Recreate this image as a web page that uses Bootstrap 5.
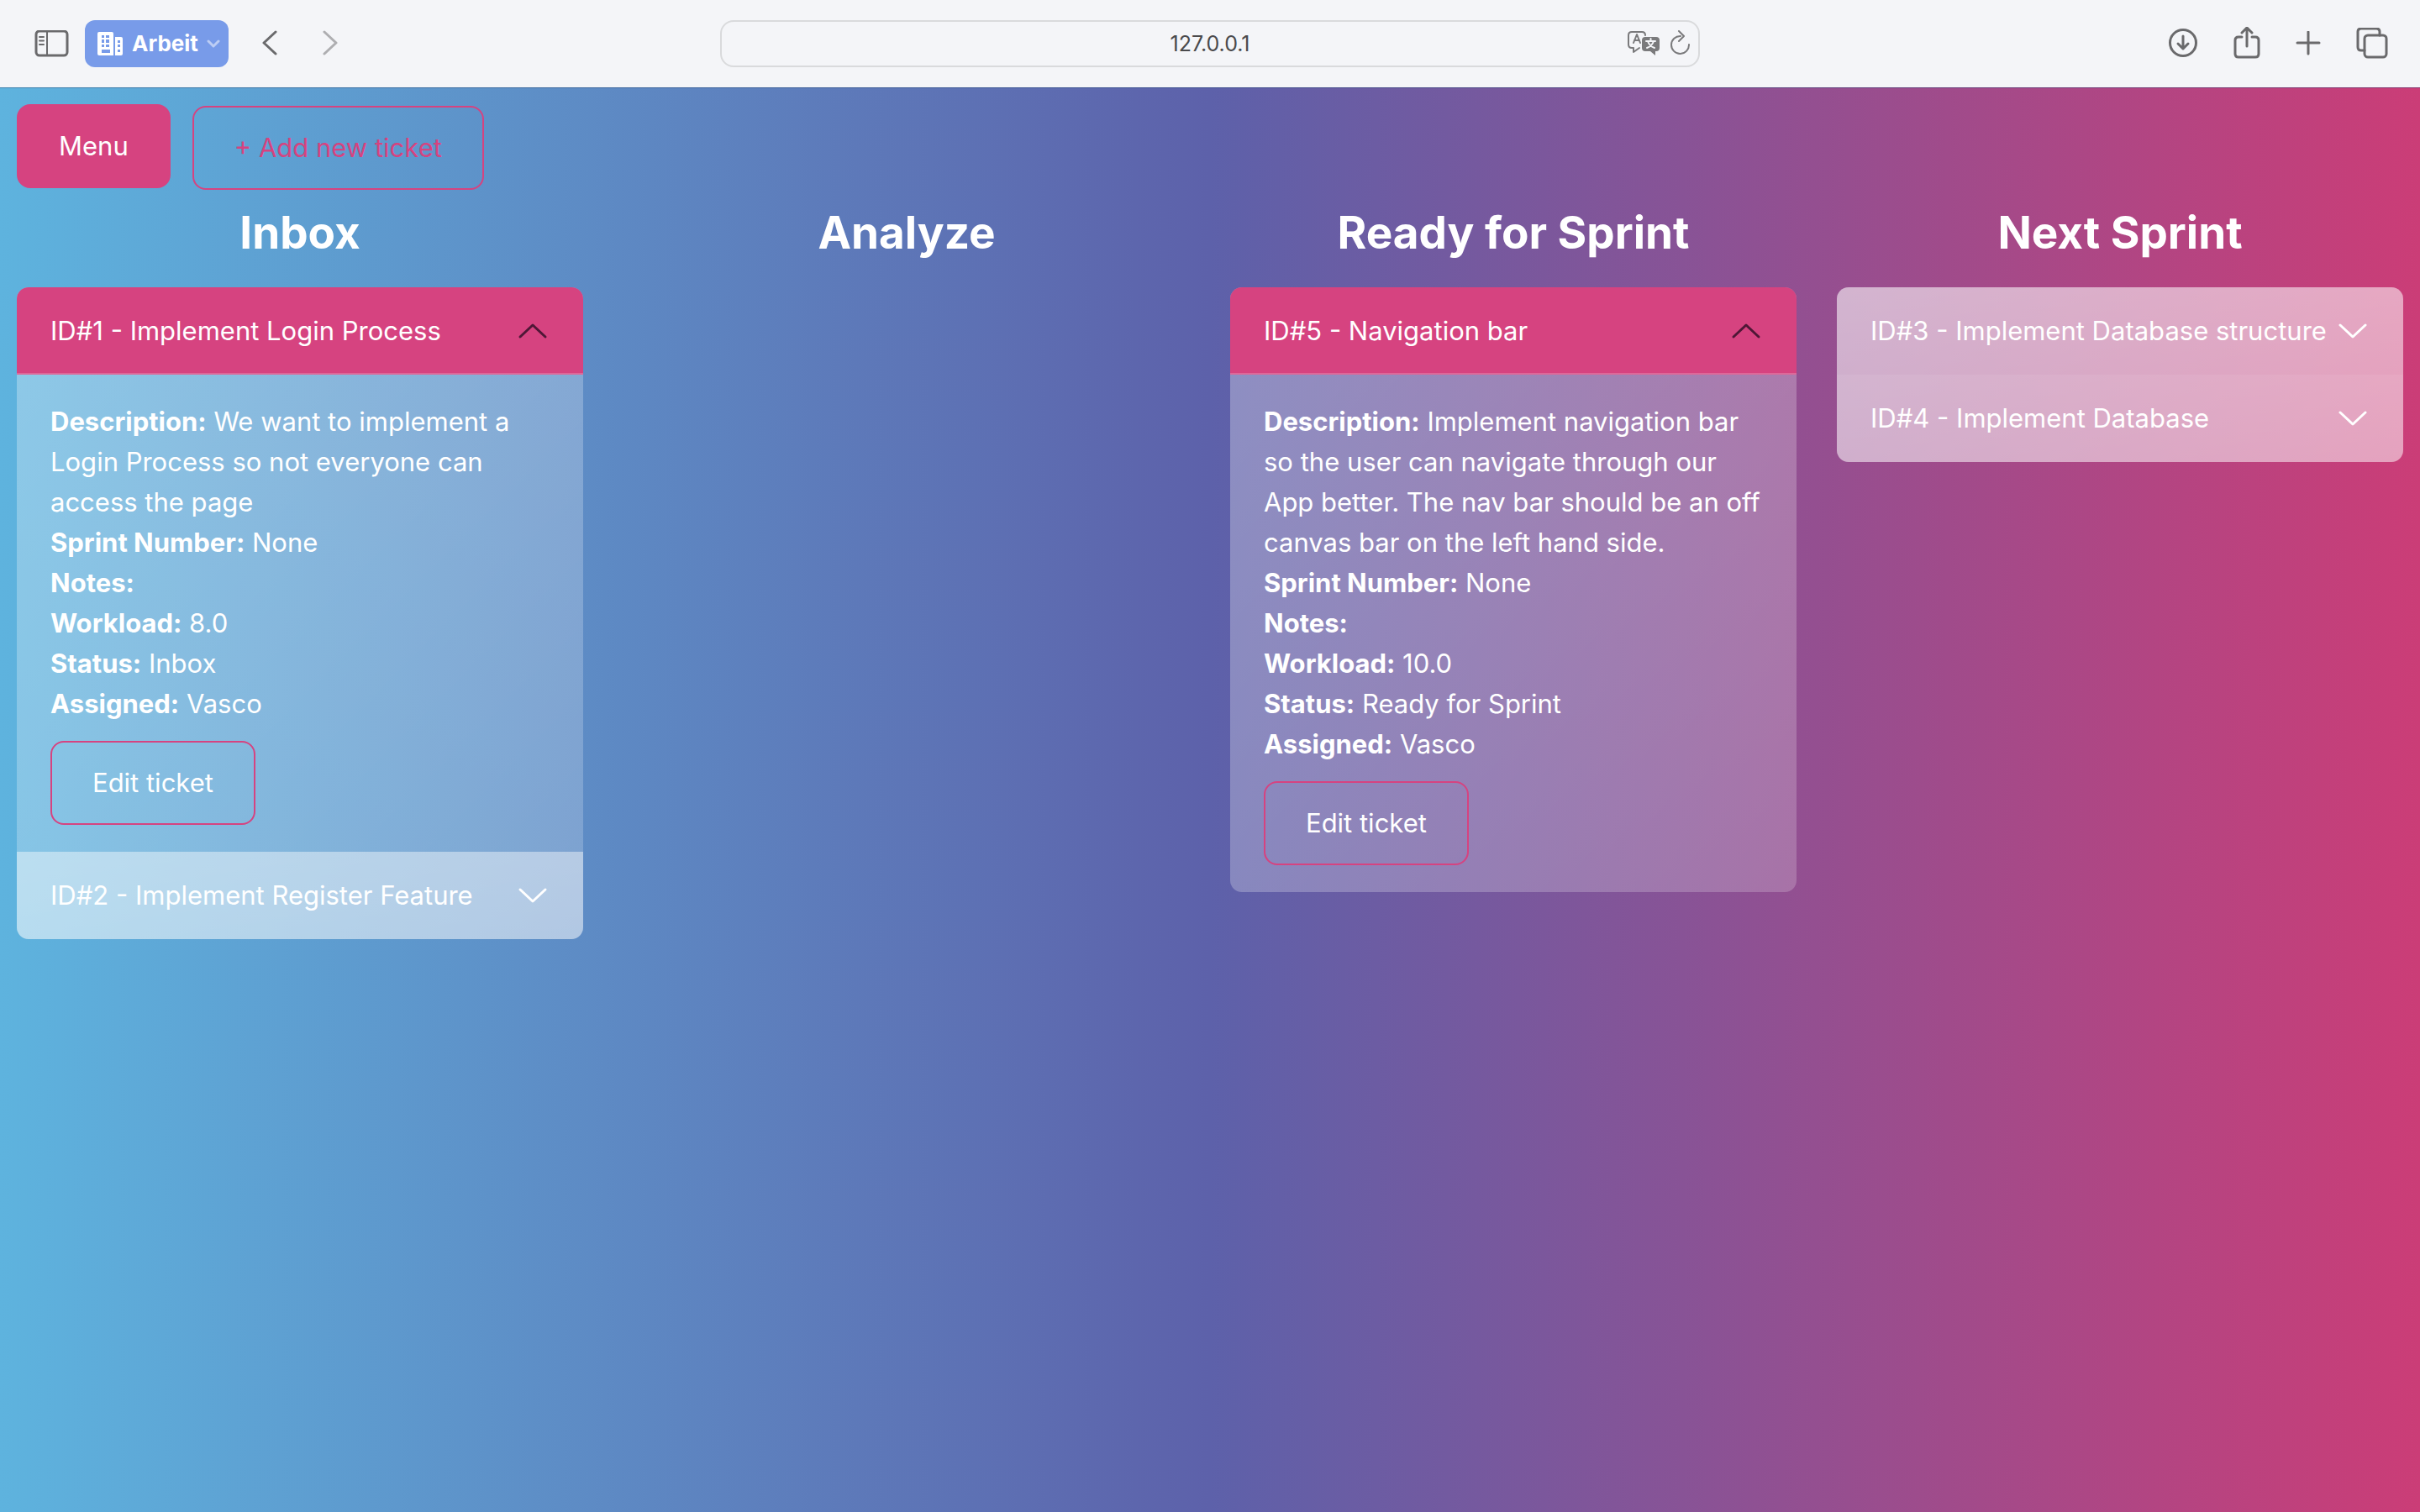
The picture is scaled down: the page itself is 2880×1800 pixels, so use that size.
<!DOCTYPE html>
<html lang="en">
<head>
<meta charset="utf-8">
<meta name="viewport" content="width=device-width, initial-scale=1">
<title>Backlog</title>
<link href="https://cdn.jsdelivr.net/npm/bootstrap@5.3.0/dist/css/bootstrap.min.css" rel="stylesheet">
<style>
:root { --pink: #d64380; }
body { font-family: Inter, "Liberation Sans", sans-serif; font-size: 31px; line-height: 48px; color: #fff; background: #f4f5f8; }
svg { display: block; fill: none; stroke-linecap: round; stroke-linejoin: round; }

/* browser toolbar */
.toolbar { height: 104px; padding: 0 38px 0 38px; background: #f4f5f8; color: #6a6a6c; display: grid; grid-template-columns: 1fr 1166px 1fr; }
.toolbar svg { stroke: currentColor; stroke-width: 3; }
.tool { padding: 0; border: 0; background: none; color: inherit; }
.left-tools { padding-left: 2px; }
.right-tools { gap: 42px; }
.profile { height: 56px; margin-left: 19px; padding: 0 10px 0 14px; gap: 10px; border: 0; border-radius: 12px; background: #789be9; color: #fff; font-size: 26px; font-weight: 700; line-height: 32px; }
.profile .caret { width: 16px; stroke: #fff; }
.address { position: relative; height: 56px; }
.address input { width: 100%; height: 56px; border: 2px solid #d9dadc; border-radius: 16px; background: transparent; color: #4a4a4c; font-size: 25px; text-align: center; }
.address-tools { position: absolute; top: 0; right: 11px; height: 56px; gap: 11px; color: #7a7a7c; }

/* board */
.board { flex: 1; padding: 20px; background: linear-gradient(to right, #5eb3de, #5d61aa 50%, #cb3d77); box-shadow: inset 0 1px 0 rgba(0,40,90,.35); }
.btn-ticket { --bs-btn-font-size: 31px; --bs-btn-line-height: 48px; --bs-btn-padding-y: 24px; --bs-btn-padding-x: 48px; --bs-btn-border-width: 2px; --bs-btn-border-radius: 16px; --bs-btn-border-color: var(--pink); --bs-btn-color: #fff; }
.btn-menu { --bs-btn-bg: var(--pink); }
.btn-add { --bs-btn-color: var(--pink); margin-top: 2px; }
.actions { gap: 26px; }
.lanes { gap: 48px; }
.lane { flex: 1 1 0; min-width: 0; }
.lane-title { margin: 16px 0 30px; font-size: 53px; line-height: 70px; font-weight: 700; text-align: center; }
.accordion { --bs-accordion-bg: transparent; --bs-accordion-color: #fff; --bs-accordion-border-width: 0; --bs-accordion-border-radius: 14px; --bs-accordion-inner-border-radius: 14px; --bs-accordion-btn-padding-x: 40px; --bs-accordion-body-padding-x: 40px; --bs-accordion-body-padding-y: 32px; }
.accordion-item { background: linear-gradient(to right bottom, rgba(255,255,255,.3), rgba(255,255,255,.2)); }
.accordion-button { height: 104px; gap: 6px; font-size: 31px; line-height: 38px; color: #fff; background: rgba(255,255,255,.4); }
.accordion-button::after { display: none; }
.accordion-button svg { flex: none; margin-left: auto; stroke: #fff; stroke-width: 3; }
.accordion-button:not(.collapsed) { color: #fff; background: var(--pink); box-shadow: inset 0 -2px 0 rgba(255,255,255,.2); }
.accordion-button:not(.collapsed) svg { stroke: #4f1736; transform: rotate(180deg); }
.btn-edit { margin-top: 20px; }
</style>
</head>
<body class="d-flex flex-column min-vh-100">
<header class="toolbar align-items-center">
  <div class="left-tools d-flex align-items-center">
    <button class="tool" aria-label="Sidebar"><svg width="42" height="32" viewBox="0 0 42 32"><rect x="3" y="1" width="37" height="29" rx="4"/><path d="M16 1v29M7 8h5M7 12.500h5M7 17h5" stroke-width="2"/></svg></button>
    <button class="profile d-flex align-items-center"><svg width="32" height="30" viewBox="0 0 32 30"><path fill="#fff" stroke="none" fill-rule="evenodd" d="M3 1h15q2 0 2 2v26H3q-2 0-2-2V3q0-2 2-2zM6 5v3h3V5zm5 0v3h4V5zM6 10v4h3v-4zm5 0v4h4v-4zM6 16v3h3v-3zm5 0v3h4v-3zM6 22v4h10v-4zM22 7h7q2 0 2 2v18q0 2-2 2h-7zM25 11v3h3v-3zm0 5v3h3v-3zm0 6v3h3v-3z"/></svg>Arbeit<svg class="caret" height="12" viewBox="0 0 16 12" opacity=".5"><path d="M2 3l6 6 6-6"/></svg></button>
    <button class="tool ms-4" aria-label="Back"><svg class="ms-3" width="18" height="32" viewBox="0 0 18 32"><path d="M16 2L2 15l14 13"/></svg></button>
    <button class="tool" aria-label="Forward" disabled><svg class="ms-5" width="26" height="32" viewBox="0 0 26 32" opacity=".5"><path d="M8 2l14 13L8 28"/></svg></button>
  </div>
  <div class="address">
    <input type="text" value="127.0.0.1" aria-label="Address">
    <div class="address-tools d-flex align-items-center">
      <button class="tool" aria-label="Translate"><svg width="38" height="32" viewBox="0 0 38 32"><path d="M14 21l-7 5v-5H5q-4 0-4-4V6q0-4 4-4h12q4 0 4 4M7 15l4-10 4 10M8 12h6" stroke-width="2"/><path fill="currentColor" stroke="none" d="M21 8h13q4 0 4 4v9q0 4-4 4h-1v5l-6-5h-6q-4 0-4-4v-9q0-4 4-4z"/><path d="M22 13h11M27.500 10v3M24 13q2 6 8 8M31 13q-2 6-8 8" stroke="#f4f5f8" stroke-width="2"/></svg></button>
      <button class="tool" aria-label="Reload"><svg width="26" height="32" viewBox="0 0 26 32"><path d="M14 7a10.500 10.500 0 1 0 10 10M12 1l6 6-6 6" stroke-width="2"/></svg></button>
    </div>
  </div>
  <div class="right-tools d-flex align-items-center justify-content-end">
    <button class="tool" aria-label="Downloads"><svg width="36" height="36" viewBox="0 0 36 36"><circle cx="18" cy="17" r="15.500"/><path d="M18 9v15M12 18l6 6 6-6"/></svg></button>
    <button class="tool" aria-label="Share"><svg width="32" height="40" viewBox="0 0 32 40"><path d="M10 12H6q-4 0-4 4v16q0 4 4 4h20q4 0 4-4V16q0-4-4-4h-4M16 23V2M10 7l6-6 6 6"/></svg></button>
    <button class="tool" aria-label="New tab"><svg width="30" height="30" viewBox="0 0 30 30"><path d="M15 1v26M2 14h26"/></svg></button>
    <button class="tool" aria-label="Tabs"><svg width="38" height="38" viewBox="0 0 38 38"><rect x="10" y="9" width="26" height="26" rx="4"/><path d="M10 27H6q-4 0-4-4V5q0-4 4-4h18q4 0 4 4v4"/></svg></button>
  </div>
</header>
<main class="board">
  <div class="actions d-flex align-items-start">
    <button class="btn btn-ticket btn-menu">Menu</button>
    <a href="#" class="btn btn-ticket btn-add">+ Add new ticket</a>
  </div>
  <div class="lanes d-flex align-items-start">
    <section class="lane">
      <h1 class="lane-title">Inbox</h1>
      <div class="accordion">
        <div class="accordion-item">
          <button class="accordion-button" data-bs-toggle="collapse" data-bs-target="#t1">ID#1 - Implement Login Process<svg width="40" height="40" viewBox="0 0 40 40"><path d="M5 13l15 14 15-14"/></svg></button>
          <div id="t1" class="accordion-collapse collapse show"><div class="accordion-body">
            <div><b>Description:</b> We want to implement a Login Process so not everyone can access the page</div>
            <div><b>Sprint Number:</b> None</div>
            <div><b>Notes:</b></div>
            <div><b>Workload:</b> 8.0</div>
            <div><b>Status:</b> Inbox</div>
            <div><b>Assigned:</b> Vasco</div>
            <a href="#" class="btn btn-ticket btn-edit">Edit ticket</a>
          </div></div>
        </div>
        <div class="accordion-item">
          <button class="accordion-button collapsed">ID#2 - Implement Register Feature<svg width="40" height="40" viewBox="0 0 40 40"><path d="M5 13l15 14 15-14"/></svg></button>
        </div>
      </div>
    </section>
    <section class="lane">
      <h1 class="lane-title">Analyze</h1>
    </section>
    <section class="lane">
      <h1 class="lane-title">Ready for Sprint</h1>
      <div class="accordion">
        <div class="accordion-item">
          <button class="accordion-button" data-bs-toggle="collapse" data-bs-target="#t5">ID#5 - Navigation bar<svg width="40" height="40" viewBox="0 0 40 40"><path d="M5 13l15 14 15-14"/></svg></button>
          <div id="t5" class="accordion-collapse collapse show"><div class="accordion-body">
            <div><b>Description:</b> Implement navigation bar so the user can navigate through our App better. The nav bar should be an off canvas bar on the left hand side.</div>
            <div><b>Sprint Number:</b> None</div>
            <div><b>Notes:</b></div>
            <div><b>Workload:</b> 10.0</div>
            <div><b>Status:</b> Ready for Sprint</div>
            <div><b>Assigned:</b> Vasco</div>
            <a href="#" class="btn btn-ticket btn-edit">Edit ticket</a>
          </div></div>
        </div>
      </div>
    </section>
    <section class="lane">
      <h1 class="lane-title">Next Sprint</h1>
      <div class="accordion">
        <div class="accordion-item">
          <button class="accordion-button collapsed">ID#3 - Implement Database structure<svg width="40" height="40" viewBox="0 0 40 40"><path d="M5 13l15 14 15-14"/></svg></button>
        </div>
        <div class="accordion-item">
          <button class="accordion-button collapsed">ID#4 - Implement Database<svg width="40" height="40" viewBox="0 0 40 40"><path d="M5 13l15 14 15-14"/></svg></button>
        </div>
      </div>
    </section>
  </div>
</main>
<script src="https://cdn.jsdelivr.net/npm/bootstrap@5.3.0/dist/js/bootstrap.bundle.min.js"></script>
</body>
</html>
